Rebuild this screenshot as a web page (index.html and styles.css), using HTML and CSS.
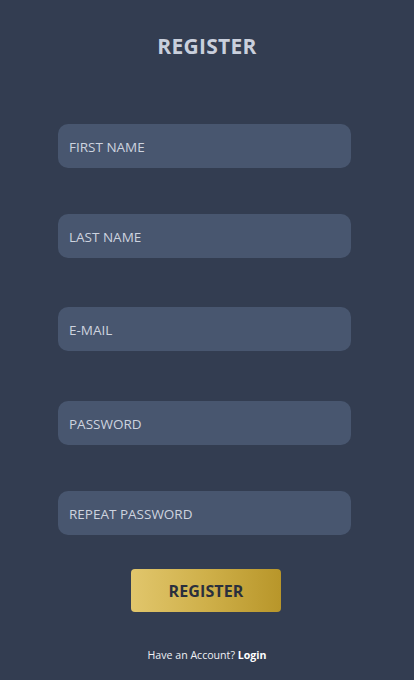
FILE: index.html
```html
<!DOCTYPE html>
<html>
<head>
<meta charset="utf-8">
<link rel="stylesheet" href="styles.css">
</head>
<body>
<main class="page">
  <h1 class="title">REGISTER</h1>
  <form class="form">
    <input class="field f1" type="text" placeholder="FIRST NAME">
    <input class="field f2" type="text" placeholder="LAST NAME">
    <input class="field f3" type="text" placeholder="E-MAIL">
    <input class="field f4" type="password" placeholder="PASSWORD">
    <input class="field f5" type="password" placeholder="REPEAT PASSWORD">
    <button class="btn" type="button">REGISTER</button>
  </form>
  <p class="foot">Have an Account? <a class="login" href="#">Login</a></p>
</main>
</body>
</html>
```
FILE: styles.css
```css
* { box-sizing: border-box; }
html, body { margin: 0; padding: 0; }
body {
  background: #333d51;
  font-family: "Open Sans", "Noto Sans", sans-serif;
  height: 680px;
  overflow: hidden;
}
.page {
  display: flex;
  flex-direction: column;
  align-items: center;
  padding-top: 33px;
}
.title {
  margin: 0;
  font-size: 21px;
  line-height: 26px;
  font-weight: 700;
  color: #c9cfdc;
  letter-spacing: 0.3px;
}
.form {
  display: flex;
  flex-direction: column;
  align-items: center;
  margin-top: 65px;
}
.field {
  width: 293px;
  height: 44px;
  margin-right: 5px;
  border: none;
  border-radius: 10px;
  background: #48566f;
  padding: 1px 11px 0;
  font-family: inherit;
  font-size: 13.5px;
  color: #d2d8e3;
  outline: none;
}
.field::placeholder { color: #cdd3df; opacity: 1; }
.f2 { margin-top: 46px; }
.f3 { margin-top: 49px; }
.f4 { margin-top: 50px; }
.f5 { margin-top: 46px; }
.btn {
  margin-top: 34px;
  margin-right: 2px;
  width: 150px;
  height: 43px;
  border: none;
  border-radius: 4px;
  background: linear-gradient(90deg, #e1c66c 0%, #cfb04a 50%, #b8962a 100%);
  color: #2a2f3d;
  font-family: inherit;
  font-size: 16px;
  font-weight: 700;
  letter-spacing: 0.1px;
}
.foot {
  margin: 36px 0 0;
  font-size: 10.6px;
  color: #eef0f4;
}
.login {
  color: #ffffff;
  font-weight: 700;
  text-decoration: none;
}
```
